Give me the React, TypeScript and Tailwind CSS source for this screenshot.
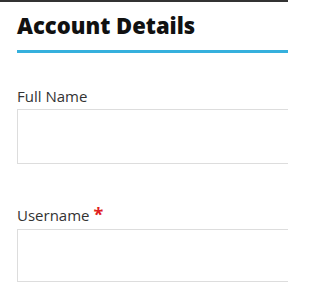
export default function App() {
  return (
    <div className="h-[288px] w-[288px] overflow-hidden bg-white border-t-2 border-[#333333] font-['Open_Sans',sans-serif]">
      <div className="pl-[17px]">
        <h2 className="pt-[8px] pb-[10px] text-[22px] font-extrabold leading-[30px] text-[#111111] border-b-[3px] border-[#35b0dd] whitespace-nowrap">
          Account Details
        </h2>
        <div className="pt-[33px]">
          <label className="block text-[15px] leading-[20px] text-[#333333]">Full Name</label>
          <div className="mt-[3px] h-[55px] w-[300px] border border-[#dddddd] bg-white"></div>
        </div>
        <div className="pt-[41px]">
          <label className="block text-[15px] leading-[20px] text-[#333333]">
            Username <span className="text-[18px] leading-[16px] text-[#e02020] font-bold">*</span>
          </label>
          <div className="mt-[4px] h-[53px] w-[300px] border border-[#dddddd] bg-white"></div>
        </div>
      </div>
    </div>
  );
}
